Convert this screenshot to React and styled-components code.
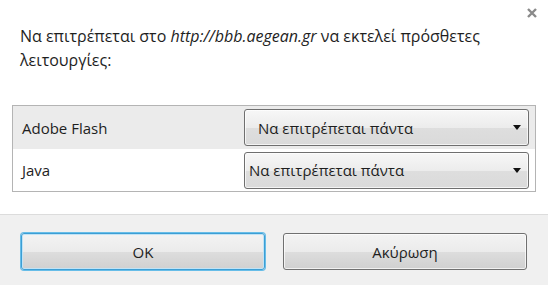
import styled, { createGlobalStyle } from 'styled-components'

const GlobalStyle = createGlobalStyle`
  html, body { margin: 0; padding: 0; background: #ffffff; }
  body { font-family: "Open Sans", "Noto Sans", sans-serif; color: #1e1e1e; }
`

const Dialog = styled.div`
  position: relative;
  display: flex;
  flex-direction: column;
  width: 548px;
  height: 285px;
  background: #ffffff;
`

const Close = styled.button`
  position: absolute;
  top: 7px;
  right: 10px;
  width: 12px;
  height: 12px;
  padding: 0;
  border: none;
  background: none;
  cursor: pointer;
`

const Body = styled.div`
  flex: 1;
  padding: 24px 12px 0 12px;
`

const Message = styled.p`
  margin: 0 0 33px 8px;
  font-size: 16px;
  line-height: 24px;
  em { font-style: italic; }
`

const Table = styled.div`
  border: 1px solid #b4b4b4;
`

const Row = styled.div`
  display: flex;
  align-items: center;
  justify-content: space-between;
  height: ${p => p.$h}px;
  padding: 0 6px 0 9px;
  background: ${p => (p.$shaded ? '#ebebeb' : '#ffffff')};
`

const Label = styled.span`
  font-size: 15px;
`

const Select = styled.div`
  box-sizing: border-box;
  display: flex;
  align-items: center;
  justify-content: space-between;
  width: 285px;
  height: 37px;
  padding: 0 7px 0 ${p => p.$indent}px;
  border: 1px solid #6f6f6f;
  border-radius: 3px;
  background: linear-gradient(#f7f7f7, #ececec 50%, #dedede 51%, #dadada);
  box-shadow: inset 0 0 0 1px rgba(255, 255, 255, 0.7);
  font-size: 15px;
`

const Footer = styled.div`
  display: grid;
  grid-template-columns: 1fr 1fr;
  gap: 18px;
  padding: 18px 21px 15px 21px;
  background: #f0f0f0;
  border-top: 1px solid #dcdcdc;
`

const Button = styled.button`
  height: 37px;
  border: 1px solid ${p => (p.$focus ? '#3c9ed4' : '#707070')};
  border-radius: 3px;
  background: linear-gradient(#f3f3f3, #ebebeb 50%, #dddddd 51%, #d0d0d0);
  box-shadow: ${p => (p.$focus ? '0 0 0 1px #67bde8, inset 0 0 0 1px #c0e3f6' : 'inset 0 0 0 1px rgba(255,255,255,0.7)')};
  font-family: inherit;
  font-size: 15px;
  color: #1e1e1e;
`

const Arrow = () => (
  <svg width="8" height="5" viewBox="0 0 8 5">
    <path d="M0 0h8L4 5z" fill="#111" />
  </svg>
)

const plugins = [
  { name: 'Adobe Flash', shaded: true, h: 43, indent: 13 },
  { name: 'Java', shaded: false, h: 42, indent: 4 },
]

export default function App() {
  return (
    <>
      <GlobalStyle />
      <Dialog>
        <Close aria-label="close">
          <svg width="12" height="12" viewBox="0 0 12 12">
            <path d="M2 2l8 8M10 2l-8 8" stroke="#8a8a8a" strokeWidth="2.4" />
          </svg>
        </Close>
        <Body>
          <Message>
            Να επιτρέπεται στο <em>http://bbb.aegean.gr</em> να εκτελεί πρόσθετες λειτουργίες:
          </Message>
          <Table>
            {plugins.map(p => (
              <Row key={p.name} $shaded={p.shaded} $h={p.h}>
                <Label>{p.name}</Label>
                <Select $indent={p.indent}>
                  <span>Να επιτρέπεται πάντα</span>
                  <Arrow />
                </Select>
              </Row>
            ))}
          </Table>
        </Body>
        <Footer>
          <Button $focus>OK</Button>
          <Button>Ακύρωση</Button>
        </Footer>
      </Dialog>
    </>
  )
}
